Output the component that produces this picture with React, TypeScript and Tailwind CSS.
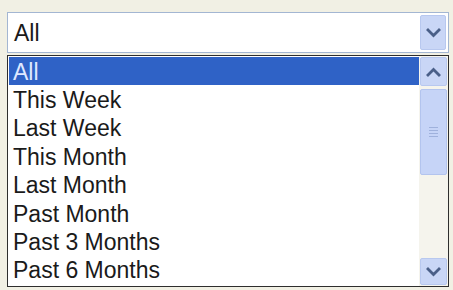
import React from "react";

const Chevron = ({ up = false }: { up?: boolean }) => (
  <svg width="15" height="10" viewBox="0 0 15 10">
    <path
      d={up ? "M2 8 L7.5 2.5 L13 8" : "M2 2 L7.5 7.5 L13 2"}
      fill="none"
      stroke="#4a5f88"
      strokeWidth="2.8"
      strokeLinecap="square"
    />
  </svg>
);

const items = [
  "All",
  "This Week",
  "Last Week",
  "This Month",
  "Last Month",
  "Past Month",
  "Past 3 Months",
  "Past 6 Months",
];

export default function App() {
  return (
    <div
      className="w-[453px] h-[290px] bg-[#f1f0e4] pt-[12px] pl-[7px] pr-[4px] overflow-hidden"
      style={{ fontFamily: '"Liberation Sans", Arial, sans-serif' }}
    >
      <div className="h-[41px] border border-[#a3b6d2] bg-white flex items-center justify-between">
        <span className="pl-[6px] pt-[1px] text-[23px] text-[#1a1a1a] leading-none">All</span>
        <div className="w-[26px] h-[35px] mr-[2px] bg-[#c9d6f6] border border-[#b8c8ef] rounded-[2px] flex items-center justify-center">
          <Chevron />
        </div>
      </div>
      <div className="mt-[2px] h-[232px] border border-[#2e2e2e] flex bg-white">
        <div className="flex-1 pt-[1px] pl-[1px]">
          {items.map((t, i) => (
            <div
              key={t}
              className={
                "h-[28.4px] flex items-center pl-[4px] pt-[2px] text-[23px] leading-none " +
                (i === 0 ? "bg-[#2f62c6] text-[#dfe8ff]" : "text-[#1a1a1a]")
              }
            >
              {t}
            </div>
          ))}
        </div>
        <div className="w-[29px] bg-[#f5f4ed] flex flex-col pt-[1px] pb-[1px] pr-[1px] pl-[1px]">
          <div className="h-[29px] bg-[#c9d6f6] border border-[#b8c8ef] rounded-[2px] flex items-center justify-center">
            <Chevron up />
          </div>
          <div className="mt-[3px] h-[86px] bg-[#c6d4f7] border border-[#b3c4ee] rounded-[2px] flex flex-col items-center justify-center gap-[2px]">
            <div className="w-[9px] h-[1px] bg-[#9fb1dc]" />
            <div className="w-[9px] h-[1px] bg-[#9fb1dc]" />
            <div className="w-[9px] h-[1px] bg-[#9fb1dc]" />
            <div className="w-[9px] h-[1px] bg-[#9fb1dc]" />
          </div>
          <div className="flex-1" />
          <div className="h-[27px] bg-[#c9d6f6] border border-[#b8c8ef] rounded-[2px] flex items-center justify-center">
            <Chevron />
          </div>
        </div>
      </div>
    </div>
  );
}
